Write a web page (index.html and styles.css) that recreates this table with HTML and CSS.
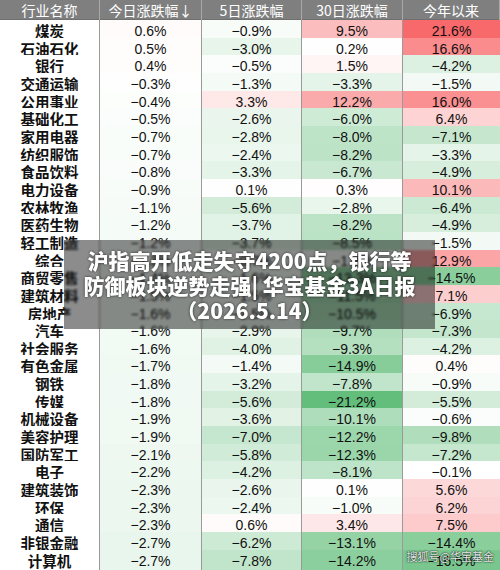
FILE: index.html
```html
<!DOCTYPE html>
<html lang="zh-CN">
<head>
  <meta charset="UTF-8" />
  <meta name="viewport" content="width=device-width, initial-scale=1.0"/>
  <title>行业涨跌幅</title>
  <link rel="stylesheet" href="styles.css">
</head>
<body>

  <div class="sheet">
    <!-- Header -->
    <div class="row head">
      <div class="cell">行业名称</div>
      <div class="cell">今日涨跌幅↓</div>
      <div class="cell">5日涨跌幅</div>
      <div class="cell">30日涨跌幅</div>
      <div class="cell">今年以来</div>
    </div>

    <!-- Rows get inserted here -->
    <div id="rows"></div>

    <!-- Title banner over the table -->
    <div class="banner">
      <div>沪指高开低走失守4200点，银行等</div>
      <div>防御板块逆势走强| 华宝基金3A日报</div>
      <div>（2026.5.14）</div>
    </div>

    <div class="mark">搜狐号@华宝基金</div>
  </div>

  <script>
    const data = [
      ["煤炭", 0.6, -0.9, 9.5, 21.6],
      ["石油石化", 0.5, -3.0, 0.2, 16.6],
      ["银行", 0.4, -0.5, 1.5, -4.2],
      ["交通运输", -0.3, -1.3, -3.3, -1.5],
      ["公用事业", -0.4, 3.3, 12.2, 16.0],
      ["基础化工", -0.5, -2.6, -6.0, 6.4],
      ["家用电器", -0.7, -2.8, -8.0, -7.1],
      ["纺织服饰", -0.7, -2.4, -8.2, -3.3],
      ["食品饮料", -0.8, -3.3, -6.7, -4.9],
      ["电力设备", -0.9, 0.1, 0.3, 10.1],
      ["农林牧渔", -1.1, -5.6, -2.8, -6.4],
      ["医药生物", -1.2, -3.7, -8.2, -4.9],
      ["轻工制造", -1.2, -3.7, -8.5, -1.5],
      ["综合", -1.3, -0.7, -1.4, 12.9],
      ["商贸零售", -1.4, -1.6, -13.3, -14.5],
      ["建筑材料", -1.5, -1.5, -11.5, 7.1],
      ["房地产", -1.6, -1.5, -10.5, -6.9],
      ["汽车", -1.6, -2.9, -9.7, -7.3],
      ["社会服务", -1.6, -4.0, -9.3, -4.2],
      ["有色金属", -1.7, -1.4, -14.9, 0.4],
      ["钢铁", -1.8, -3.2, -7.8, -0.9],
      ["传媒", -1.8, -5.6, -21.2, -5.5],
      ["机械设备", -1.9, -3.6, -10.1, -0.6],
      ["美容护理", -1.9, -7.0, -12.2, -9.8],
      ["国防军工", -2.1, -5.8, -12.3, -7.2],
      ["电子", -2.2, -4.2, -8.1, -0.1],
      ["建筑装饰", -2.3, -2.6, 0.1, 5.6],
      ["环保", -2.3, -2.4, -1.0, 6.2],
      ["通信", -2.3, 0.6, 3.4, 7.5],
      ["非银金融", -2.7, -6.2, -13.1, -14.4],
      ["计算机", -2.7, -7.8, -14.2, -16.5]
    ];

    // red / white / green scale over the whole table
    const RED = [248, 105, 107];
    const GREEN = [99, 190, 123];
    const MAX = 21.6;
    const MIN = -21.2;

    function shade(v) {
      let t, c;
      if (v >= 0) { t = v / MAX; c = RED; }
      else { t = Math.min(1, (v / MIN) * 1.1); c = GREEN; }
      const mix = c.map(x => Math.round(255 - t * (255 - x)));
      return `rgb(${mix.join(",")})`;
    }

    function fmt(v) {
      const s = Math.abs(v).toFixed(1) + "%";
      return v < 0 ? "\u2212" + s : s;
    }

    const rows = document.getElementById("rows");
    data.forEach(r => {
      const row = document.createElement("div");
      row.className = "row";
      let html = `<div class="cell name">${r[0]}</div>`;
      for (let i = 1; i < 5; i++) {
        html += `<div class="cell num" style="background:${shade(r[i])}">${fmt(r[i])}</div>`;
      }
      row.innerHTML = html;
      rows.appendChild(row);
    });
  </script>

</body>
</html>
```

FILE: styles.css
```css
body {
  margin: 0;
  background-color: #fff;
  font-family: "Liberation Sans", Arial, "Noto Sans CJK SC", sans-serif;
}

.sheet {
  position: relative;
  width: 500px;
  height: 570px;
  overflow: hidden;
  background-color: #fff;
}

.row {
  display: grid;
  grid-template-columns: 100px 102px 100px 101px 97px;
  height: 17.67px;
  box-sizing: border-box;
  border-bottom: 1px solid #c9c9c9;
}

.cell {
  display: flex;
  align-items: center;
  justify-content: center;
  border-right: 1px solid #9a9a9a;
  color: #111;
  font-size: 14px;
  white-space: nowrap;
}

.cell:last-child {
  border-right: none;
}

.head {
  height: 20px;
  background-color: #7f7f7f;
  border-bottom: 1px solid #6f6f6f;
}

.head .cell {
  color: #fff;
  font-family: "Noto Sans CJK SC", sans-serif;
  font-size: 14px;
  border-right: 1px solid #a8a8a8;
}

.name {
  font-family: "Noto Sans CJK SC", sans-serif;
  font-weight: 700;
  font-size: 14.5px;
  background-color: #fff;
}

.num {
  padding-top: 1px;
}

.banner {
  position: absolute;
  left: 64px;
  top: 240px;
  width: 371px;
  height: 89px;
  box-sizing: border-box;
  padding-top: 8px;
  background-color: rgba(0, 0, 0, 0.45);
  backdrop-filter: blur(1.2px);
  color: #fff;
  font-family: "Noto Sans CJK SC", sans-serif;
  font-weight: 900;
  font-size: 21px;
  line-height: 25px;
  text-align: center;
  text-shadow: 0 0 3px rgba(0, 0, 0, 0.7);
  white-space: nowrap;
}

.mark {
  position: absolute;
  right: 6px;
  bottom: 8px;
  color: rgba(255, 255, 255, 0.92);
  font-family: "Noto Sans CJK SC", sans-serif;
  font-size: 11px;
  line-height: 12px;
  text-shadow: 0 0 2px rgba(0, 0, 0, 0.8), 0 0 1px rgba(0, 0, 0, 0.8);
}
```
